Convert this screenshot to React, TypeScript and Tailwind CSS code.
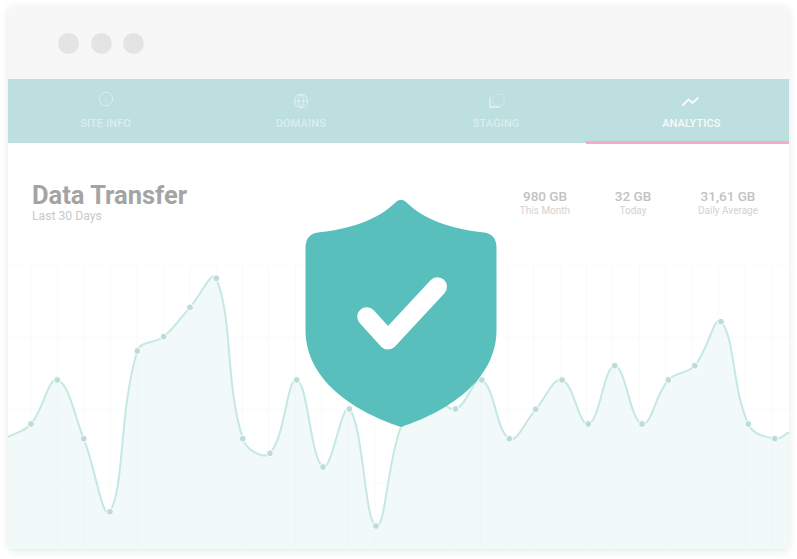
import { Globe, Info } from "lucide-react";

// ── Chart data (page coordinates, chart box starts at 8,250) ─────────────────

const POINTS: [number, number][] = [
  [8, 437], [31, 424], [57.3, 380], [83.7, 438.7], [110, 511.7], [137.3, 351], [163.7, 336.7],
  [190, 307.3], [216.3, 278.3], [242.7, 438.7], [270, 453.3], [296.7, 380], [323, 467],
  [349.4, 409], [376, 526], [402, 424], [428.8, 395], [455.5, 409], [481.8, 380], [509.3, 438.7],
  [535.7, 409.3], [562, 380], [588.3, 424], [614.7, 365.7], [642, 424], [668.3, 380],
  [694.7, 365.7], [721, 321.7], [748.3, 424], [774.7, 438.7], [790, 432],
];

const VERTICALS = Array.from({ length: 29 }, (_, i) => 31 + i * 26.45);
const HORIZONTALS = [264, 337, 409, 483];

// Same spline maths as a line chart with tension 0.4
function splinePath(pts: [number, number][], tension = 0.4) {
  const controls = pts.map((cur, i) => {
    const prev = pts[i - 1] ?? cur;
    const next = pts[i + 1] ?? cur;
    const d01 = Math.hypot(cur[0] - prev[0], cur[1] - prev[1]);
    const d12 = Math.hypot(next[0] - cur[0], next[1] - cur[1]);
    const total = d01 + d12 || 1;
    const fa = (tension * d01) / total;
    const fb = (tension * d12) / total;
    return {
      before: [cur[0] - fa * (next[0] - prev[0]), cur[1] - fa * (next[1] - prev[1])],
      after: [cur[0] + fb * (next[0] - prev[0]), cur[1] + fb * (next[1] - prev[1])],
    };
  });
  let d = `M${pts[0][0]} ${pts[0][1]}`;
  for (let i = 1; i < pts.length; i++) {
    const a = controls[i - 1].after;
    const b = controls[i].before;
    d += ` C${a[0]} ${a[1]} ${b[0]} ${b[1]} ${pts[i][0]} ${pts[i][1]}`;
  }
  return d;
}

const LINE = splinePath(POINTS);

// ── Sub-components ───────────────────────────────────────────────────────────

function StagingIcon() {
  return (
    <svg width="18" height="18" viewBox="0 0 18 18" fill="none" stroke="currentColor" className="translate-x-[1px]">
      <rect x="5.5" y="2.5" width="10.500" height="10.500" strokeWidth="1.200" strokeDasharray="1.300 1.700" />
      <path d="M2 5v10h10.500" strokeWidth="1.800" />
    </svg>
  );
}

function AnalyticsIcon() {
  return (
    <svg width="18" height="18" viewBox="0 0 18 18" fill="none" stroke="currentColor" strokeWidth="2">
      <path d="M0.5 13.5l6-6 4 3.4 6-5.4" />
    </svg>
  );
}

function Tab({ label, active, icon, iconClass }: { label: string; active?: boolean; icon: React.ReactNode; iconClass: string }) {
  return (
    <div className={`relative flex-1 h-full flex flex-col items-center ${active ? "text-white/85" : "text-white/45"}`}>
      <div className={`h-[38px] flex justify-center ${iconClass}`}>{icon}</div>
      <span className="text-[11px] leading-[14px] font-medium tracking-[0.1px]">{label}</span>
      {/* underline runs a little past the tab on its left */}
      {active && <div className="absolute left-[-8px] right-0 bottom-[-0.5px] h-[3px] bg-[#f8aac6]" />}
    </div>
  );
}

function Stat({ value, label, className }: { value: string; label: string; className: string }) {
  return (
    <div className={`flex flex-col items-center ${className}`}>
      <span className="text-[13.500px] leading-[16px] font-medium text-[#c2c2c2]">{value}</span>
      <span className="text-[10px] leading-[13px] text-[#d2d2d2]">{label}</span>
    </div>
  );
}

function Shield() {
  return (
    <svg width="192" height="229" viewBox="305 199 192 229" className="absolute left-[297px] top-[191px]">
      <path
        fill="#58bfbd"
        d="M396.5 201.5 Q401 198 405.500 201.500 C424 220 452 229 484 232.500 Q496 234 496.500 247 L496.500 330 C496.500 378 452 410 401 427 C350 410 305.500 378 305.500 330 L305.500 247 Q306 234 318 232.500 C350 229 378 220 396.500 201.500Z"
      />
      <path
        d="M366.700 316.700 L388 340 L437.500 286.700"
        fill="none"
        stroke="#fff"
        strokeWidth="19"
        strokeLinecap="round"
        strokeLinejoin="round"
      />
    </svg>
  );
}

// ── Main component ───────────────────────────────────────────────────────────

export default function App() {
  return (
    <div className="w-[797px] h-[559px] bg-white p-2 overflow-hidden font-['Roboto',sans-serif]">
      <div className="relative w-[781px] h-[543px] flex flex-col rounded-b-[6px] rounded-t-[4px] bg-white shadow-[0_0_8px_rgba(0,0,0,0.09)] overflow-hidden">
        {/* Browser bar */}
        <div className="h-[71px] shrink-0 bg-[#f7f7f7] flex items-center pl-[50px]">
          <span className="w-[21px] h-[21px] rounded-full bg-[#e4e4e4]" />
          <span className="w-[21px] h-[21px] rounded-full bg-[#e4e4e4] ml-[12px]" />
          <span className="w-[21px] h-[21px] rounded-full bg-[#e4e4e4] ml-[11px]" />
        </div>

        {/* Tabs */}
        <div className="h-[64px] shrink-0 bg-[#bddfdf] flex">
          <Tab label="SITE INFO" iconClass="pt-[12px]" icon={<Info size={16} strokeWidth={1.500} />} />
          <Tab label="DOMAINS" iconClass="pt-[14px]" icon={<Globe size={16} strokeWidth={1.700} />} />
          <Tab label="STAGING" iconClass="pt-[13px]" icon={<StagingIcon />} />
          <Tab label="ANALYTICS" active iconClass="pt-[13px]" icon={<AnalyticsIcon />} />
        </div>

        {/* Heading + stats */}
        <div className="h-[108px] shrink-0 flex items-start pl-[24px]">
          <div className="flex flex-col mt-[38px]">
            <span className="text-[25.500px] leading-[28px] font-bold text-[#a4a4a4]">Data Transfer</span>
            <span className="text-[12.200px] leading-[15px] text-[#c9c9c9]">Last 30 Days</span>
          </div>
          <div className="ml-auto flex mt-[45px]">
            <Stat value="980 GB" label="This Month" className="w-[88px]" />
            <Stat value="32 GB" label="Today" className="w-[88px]" />
            <Stat value="31,61 GB" label="Daily Average" className="w-[102px] mr-[10px]" />
          </div>
        </div>

        {/* Chart */}
        <svg className="block w-[781px] h-[300px]" viewBox="8 251 781 300">
          {VERTICALS.map((x) => (
            <line key={x} x1={x} x2={x} y1="264" y2="551" stroke="#f9fafa" />
          ))}
          {HORIZONTALS.map((y) => (
            <line key={y} x1="8" x2="789" y1={y} y2={y} stroke="#f9fafa" />
          ))}
          <path d={`${LINE} L790 551 L8 551Z`} fill="#e6f4f4" fillOpacity="0.55" />
          <path d={LINE} fill="none" stroke="#c5e8e4" strokeWidth="2" />
          {POINTS.slice(1, -1).map(([x, y]) => (
            <circle key={x} cx={x} cy={y} r="3.400" fill="#bcdcd8" stroke="#fff" strokeWidth="1" />
          ))}
          <line x1="8" x2="789" y1="550" y2="550" stroke="#e4f1f1" />
        </svg>

        {/* Badge on top of the chart */}
        <Shield />
      </div>
    </div>
  );
}
